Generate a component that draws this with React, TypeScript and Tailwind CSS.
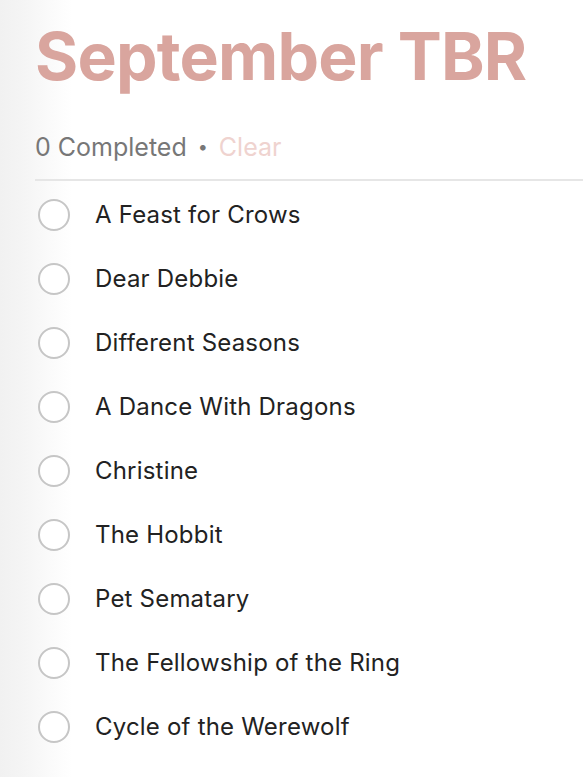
import React from 'react';

const books = [
  'A Feast for Crows',
  'Dear Debbie',
  'Different Seasons',
  'A Dance With Dragons',
  'Christine',
  'The Hobbit',
  'Pet Sematary',
  'The Fellowship of the Ring',
  'Cycle of the Werewolf',
];

export default function App() {
  return (
    <div
      className="min-h-screen w-full bg-[linear-gradient(to_right,#f1f1f1_0px,#f4f4f4_20px,#ffffff_72px)] pl-[35px] font-['Inter',sans-serif]"
    >
      {/* Title */}
      <h1 className="pt-[16px] text-[66px] leading-[80px] font-bold tracking-[-0.8px] text-[#d9a59e]">
        September TBR
      </h1>

      {/* Counter row */}
      <div className="mt-[36px] flex items-center text-[25px] leading-[30px]">
        <span className="text-[#777777]">0 Completed</span>
        <span className="mx-[11px] text-[18px] text-[#777777]">•</span>
        <button className="text-[#efd3cf]">Clear</button>
      </div>

      <div className="mt-[17px] h-[2px] bg-[#e6e6e6]" />

      {/* Book list */}
      <ul className="pt-[2px]">
        {books.map((title) => (
          <li key={title} className="flex h-[64px] items-center">
            <span className="ml-[3px] h-[32px] w-[32px] shrink-0 rounded-full border-2 border-[#c6c6c6] bg-white" />
            <span className="ml-[25px] text-[24px] tracking-[0.2px] text-[#222222]">{title}</span>
          </li>
        ))}
      </ul>
    </div>
  );
}
